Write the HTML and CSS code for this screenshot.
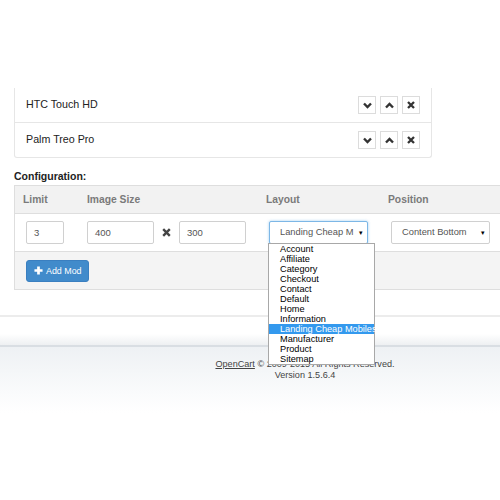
FILE: index.html
```
<!DOCTYPE html>
<html lang="en">
<head>
    <meta charset="UTF-8">
    <title>Module Settings</title>
    <link rel="stylesheet" href="styles.css">
</head>
<body>
    <div class="page">
        <div class="product-box">
            <div class="product-row">
                <span class="product-name">HTC Touch HD</span>
                <div class="row-actions">
                    <span class="icon-btn"><svg width="9" height="7" viewBox="0 0 9 7"><path d="M1 1.5 L4.5 5 L8 1.5" fill="none" stroke="#333" stroke-width="2.4"/></svg></span>
                    <span class="icon-btn"><svg width="9" height="7" viewBox="0 0 9 7"><path d="M1 5.5 L4.5 2 L8 5.5" fill="none" stroke="#333" stroke-width="2.4"/></svg></span>
                    <span class="icon-btn"><svg width="8" height="8" viewBox="0 0 8 8"><path d="M1 1 L7 7 M7 1 L1 7" fill="none" stroke="#333" stroke-width="2.3"/></svg></span>
                </div>
            </div>
            <div class="product-row">
                <span class="product-name">Palm Treo Pro</span>
                <div class="row-actions">
                    <span class="icon-btn"><svg width="9" height="7" viewBox="0 0 9 7"><path d="M1 1.5 L4.5 5 L8 1.5" fill="none" stroke="#333" stroke-width="2.4"/></svg></span>
                    <span class="icon-btn"><svg width="9" height="7" viewBox="0 0 9 7"><path d="M1 5.5 L4.5 2 L8 5.5" fill="none" stroke="#333" stroke-width="2.4"/></svg></span>
                    <span class="icon-btn"><svg width="8" height="8" viewBox="0 0 8 8"><path d="M1 1 L7 7 M7 1 L1 7" fill="none" stroke="#333" stroke-width="2.3"/></svg></span>
                </div>
            </div>
        </div>

        <h3 class="config-title">Configuration:</h3>

        <div class="config-table">
            <div class="config-head">
                <div class="col-limit">Limit</div>
                <div class="col-size">Image Size</div>
                <div class="col-layout">Layout</div>
                <div class="col-position">Position</div>
            </div>
            <div class="config-row">
                <div class="col-limit cell-limit"><div class="field w-limit">3</div></div>
                <div class="col-size cell-size">
                    <div class="field w-size">400</div>
                    <svg class="times" width="9" height="9" viewBox="0 0 9 9"><path d="M1.2 1.2 L7.8 7.8 M7.8 1.2 L1.2 7.8" fill="none" stroke="#444" stroke-width="2.4"/></svg>
                    <div class="field w-size">300</div>
                </div>
                <div class="col-layout cell-select">
                    <div class="select-box focused">Landing Cheap M<span class="caret">&#9662;</span></div>
                    <ul class="dropdown">
                        <li>Account</li>
                        <li>Affiliate</li>
                        <li>Category</li>
                        <li>Checkout</li>
                        <li>Contact</li>
                        <li>Default</li>
                        <li>Home</li>
                        <li>Information</li>
                        <li class="selected">Landing Cheap Mobiles</li>
                        <li>Manufacturer</li>
                        <li>Product</li>
                        <li>Sitemap</li>
                    </ul>
                </div>
                <div class="col-position cell-select">
                    <div class="select-box">Content Bottom<span class="caret">&#9662;</span></div>
                </div>
            </div>
            <div class="config-foot">
                <button class="btn-add"><svg width="9" height="9" viewBox="0 0 10 10"><path d="M5 0.5 V9.5 M0.5 5 H9.5" stroke="#fff" stroke-width="3"/></svg>Add Mod</button>
            </div>
        </div>

        <div class="panel-end"></div>
    </div>

    <footer class="footer">
        <div class="footer-text">
            <a href="#">OpenCart</a> &copy; 2009-2015 All Rights Reserved.<br>
            Version 1.5.6.4
        </div>
    </footer>
</body>
</html>
```

FILE: styles.css
```
html, body {
    margin: 0;
    overflow: hidden;
    background: #fff;
}

body {
    font-family: "Liberation Sans", Arial, sans-serif;
    color: #333;
    width: 500px;
}

.page {
    padding: 88px 0 0 14px;
}

.product-box {
    width: 416px;
    border: 1px solid #e6e6e6;
    border-top: none;
    border-radius: 0 0 3px 3px;
}

.product-row {
    display: flex;
    align-items: center;
    justify-content: space-between;
    height: 34px;
    padding: 0 11px;
    border-bottom: 1px solid #e6e6e6;
}

.product-row:last-child {
    border-bottom: none;
}

.product-name {
    font-size: 10.7px;
    color: #222;
    margin-top: -2px;
}

.row-actions {
    display: flex;
    gap: 4px;
}

.icon-btn {
    display: flex;
    align-items: center;
    justify-content: center;
    width: 16px;
    height: 16px;
    border: 1px solid #dcdcdc;
    background: #fff;
}

.config-title {
    margin: 11px 0 0;
    font-size: 10.5px;
    font-weight: bold;
    color: #222;
    height: 16px;
    line-height: 15px;
}

.config-table {
    border: 1px solid #dedede;
    border-right: none;
}

.config-head, .config-row {
    display: grid;
    grid-template-columns: 64px 179px 122px 1fr;
}

.config-head {
    height: 27px;
    align-items: center;
    background: #f2f2f2;
    border-bottom: 1px solid #dedede;
    font-size: 10.3px;
    font-weight: bold;
    color: #7a7a7a;
}

.config-head > div {
    padding-left: 8px;
}

.config-row {
    height: 37px;
    align-items: center;
    border-bottom: 1px solid #dedede;
}

.cell-limit {
    padding-left: 11px;
}

.cell-size {
    display: flex;
    align-items: center;
    padding-left: 8px;
}

.cell-select {
    position: relative;
    padding-left: 11px;
}

.field {
    box-sizing: border-box;
    height: 23px;
    line-height: 21px;
    border: 1px solid #d0d0d0;
    border-radius: 2px;
    font-size: 9.5px;
    color: #555;
    padding-left: 7px;
    background: #fff;
}

.w-limit {
    width: 38px;
}

.w-size {
    width: 67px;
}

.times {
    margin: 0 8px 0 8px;
}

.select-box {
    box-sizing: border-box;
    position: relative;
    width: 99px;
    height: 23px;
    line-height: 21px;
    border: 1px solid #d0d0d0;
    border-radius: 2px;
    font-size: 9.3px;
    color: #555;
    padding-left: 10px;
    background: #fff;
    white-space: nowrap;
}

.select-box.focused {
    border-color: #7db7e6;
    box-shadow: 0 0 3px rgba(102, 175, 233, 0.6);
}

.caret {
    position: absolute;
    right: 4px;
    top: 0;
    font-size: 7px;
    color: #000;
}

.dropdown {
    position: absolute;
    left: 10px;
    top: 22px;
    z-index: 5;
    box-sizing: border-box;
    width: 107px;
    margin: 0;
    padding: 0;
    list-style: none;
    background: #fff;
    border: 1px solid #a8a8a8;
    font-size: 9.2px;
    line-height: 10px;
    color: #000;
}

.dropdown li {
    height: 10px;
    padding-left: 11px;
    white-space: nowrap;
}

.dropdown li.selected {
    background: #3399ee;
    color: #fff;
}

.config-foot {
    height: 37px;
    display: flex;
    align-items: center;
    padding-left: 11px;
    background: #f4f4f4;
}

.btn-add {
    display: flex;
    align-items: center;
    gap: 3px;
    height: 22px;
    padding: 0 6px 0 7px;
    border: 1px solid #3a7fc0;
    border-radius: 3px;
    background: #418bcb;
    color: #fff;
    font-family: "Liberation Sans", Arial, sans-serif;
    font-size: 8.9px;
    white-space: nowrap;
}

.panel-end {
    margin: 25px 0 0 -14px;
    height: 28px;
    border-top: 2px solid #ececec;
    background: linear-gradient(#fff 60%, #eef0f2);
}

.footer {
    border-top: 2px solid #d9dee3;
    height: 66px;
    background: linear-gradient(#eef1f4, #fafbfc 70%, #fff);
}

.footer-text {
    padding: 12px 0 0 105px;
    width: 400px;
    text-align: center;
    font-size: 9.1px;
    line-height: 11px;
    color: #444;
}

.footer-text a {
    color: #444;
}
```
